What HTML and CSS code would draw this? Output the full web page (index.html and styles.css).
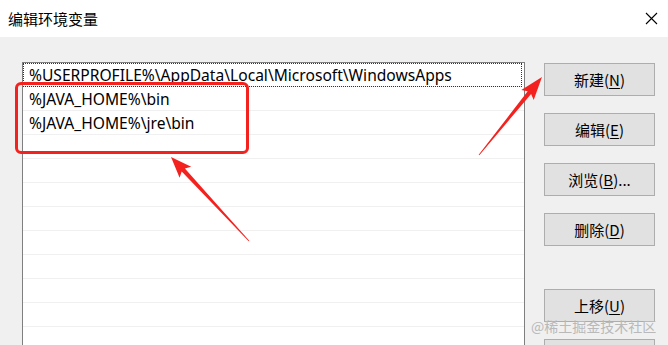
FILE: index.html
```html
<!DOCTYPE html>
<html lang="zh-CN">
<head>
<meta charset="utf-8">
<title>编辑环境变量</title>
<link rel="stylesheet" href="styles.css">
</head>
<body>
<div class="window">
  <div class="titlebar">
    <span class="title">编辑环境变量</span>
    <svg class="close" width="13" height="13" viewBox="0 0 13 13"><path d="M1 1 L12 12 M12 1 L1 12" stroke="#000" stroke-width="1.1" fill="none"/></svg>
  </div>
  <div class="content">
    <div class="listbox">
      <div class="row focused">%USERPROFILE%\AppData\Local\Microsoft\WindowsApps</div>
      <div class="row">%JAVA_HOME%\bin</div>
      <div class="row">%JAVA_HOME%\jre\bin</div>
      <div class="row"></div>
      <div class="row"></div>
      <div class="row"></div>
      <div class="row"></div>
      <div class="row"></div>
      <div class="row"></div>
      <div class="row"></div>
      <div class="row"></div>
      <div class="row"></div>
    </div>
    <div class="buttons">
      <div class="btn">新建(<u>N</u>)</div>
      <div class="btn">编辑(<u>E</u>)</div>
      <div class="btn">浏览(<u>B</u>)...</div>
      <div class="btn">删除(<u>D</u>)</div>
      <div class="btn btn-sep">上移(<u>U</u>)</div>
      <div class="btn"></div>
    </div>
  </div>
  <div class="highlight"></div>
  <svg class="arrows" width="668" height="345" viewBox="0 0 668 345">
    <polygon fill="#f4221e" points="479.3,155.3 531.1,94.0 533.7,99.9 542,77 521.3,89.9 527.7,91.2 478.7,154.7"/>
    <polygon fill="#f4221e" points="249.3,240.7 184.9,168.6 191.2,166.8 171,157 179.6,177.8 181.7,171.6 248.7,241.3"/>
  </svg>
  <div class="watermark">@稀土掘金技术社区</div>
</div>
</body>
</html>
```

FILE: styles.css
```css
html, body {
  margin: 0;
  padding: 0;
}
body {
  width: 668px;
  height: 345px;
  overflow: hidden;
  background: #f0f0f0;
  font-family: "Noto Sans", "Noto Sans CJK SC", sans-serif;
  color: #000;
}
.window {
  position: relative;
  width: 668px;
  height: 345px;
  overflow: hidden;
}
.titlebar {
  height: 37px;
  background: #fff;
  display: flex;
  align-items: center;
  justify-content: space-between;
  padding: 0 10px 0 8px;
}
.title {
  font-size: 15px;
  font-family: "Noto Sans CJK SC", sans-serif;
}
.close {
  display: block;
}
.content {
  display: flex;
  align-items: flex-start;
  padding: 25px 0 0 22px;
}
.listbox {
  width: 501px;
  height: 300px;
  border: 1px solid #7f7f7f;
  background: #fff;
  flex: none;
}
.row {
  height: 23px;
  border-bottom: 1px solid #f0f0f0;
  padding-left: 6px;
  font-size: 15.6px;
  line-height: 25px;
  white-space: nowrap;
  box-sizing: content-box;
}
.row.focused {
  outline: 1px dotted #333;
  outline-offset: -1px;
  margin-right: 2px;
}
.buttons {
  display: flex;
  flex-direction: column;
  gap: 17px;
  margin-left: 19px;
  margin-top: 1px;
}
.btn {
  width: 109px;
  height: 31px;
  border: 1px solid #adadad;
  background: #e1e1e1;
  display: flex;
  align-items: center;
  justify-content: center;
  font-size: 15px;
  font-family: "Noto Sans CJK SC", sans-serif;
}
.btn u {
  text-underline-offset: 2px;
}
.btn-sep {
  margin-top: 26px;
}
.highlight {
  position: absolute;
  left: 15px;
  top: 82px;
  width: 228px;
  height: 66px;
  border: 3px solid #f4221e;
  border-radius: 6px;
}
.arrows {
  position: absolute;
  left: 0;
  top: 0;
  pointer-events: none;
}
.watermark {
  position: absolute;
  left: 531px;
  top: 316px;
  font-size: 14px;
  font-family: "Noto Sans CJK SC", sans-serif;
  color: #b9b9b9;
  white-space: nowrap;
}
```
